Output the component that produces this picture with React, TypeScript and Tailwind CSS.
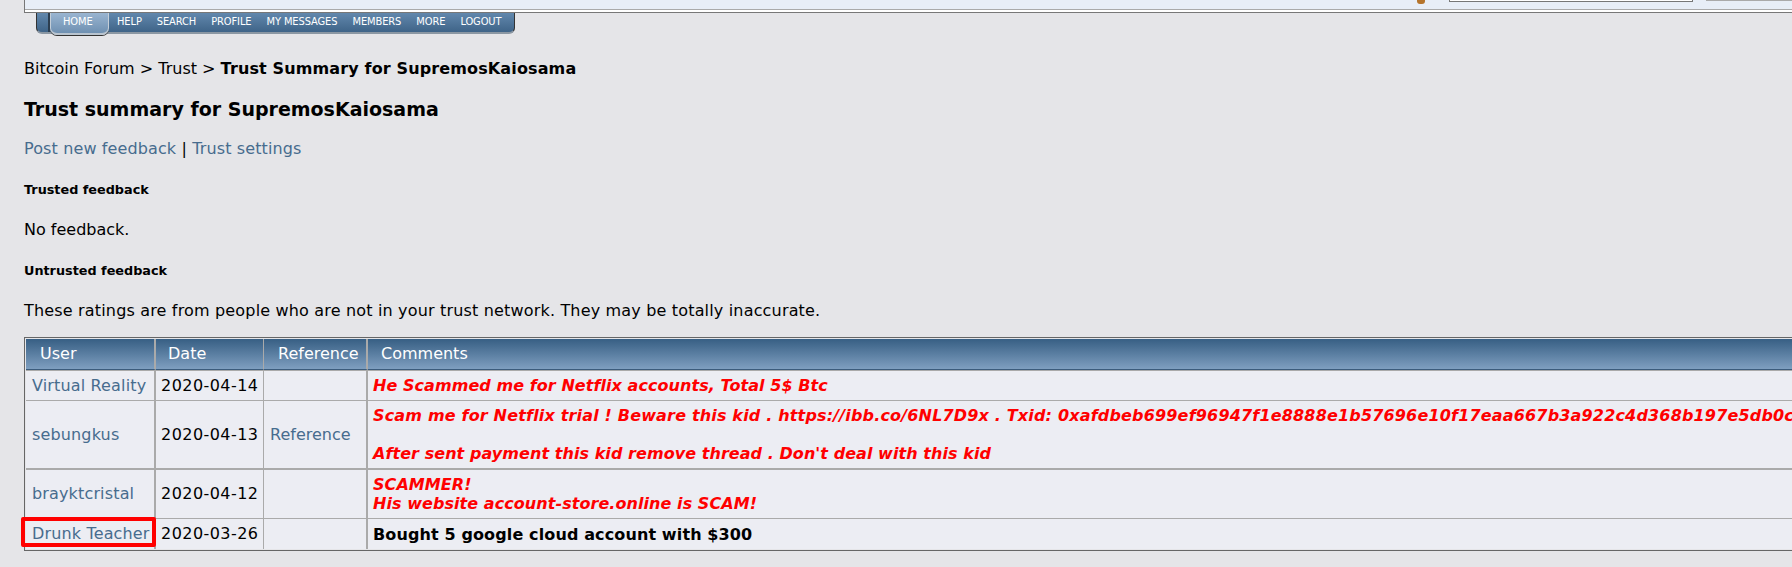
const linkColor = 'text-[#476c8e]'

const navItems = ['HELP', 'SEARCH', 'PROFILE', 'MY MESSAGES', 'MEMBERS', 'MORE', 'LOGOUT']

const rows = [
  { user: 'Virtual Reality', date: '2020-04-14', reference: '', height: 'h-[29px]' },
  { user: 'sebungkus', date: '2020-04-13', reference: 'Reference', height: 'h-[67px]' },
  { user: 'brayktcristal', date: '2020-04-12', reference: '', height: 'h-[49px] border-t border-t-[#aaaaaa]' },
  { user: 'Drunk Teacher', date: '2020-03-26', reference: '', height: 'h-[30px]' },
]

const columns = [
  { title: 'User', className: 'pl-[14px] border-r-2 border-r-[#aaaaaa]' },
  { title: 'Date', className: 'pl-[12px] border-r border-r-[#aaaaaa]' },
  { title: 'Reference', className: 'pl-[14px] border-r-2 border-r-[#aaaaaa]' },
  { title: 'Comments', className: 'pl-[13px]' },
]

function Comment({ index }: { index: number }) {
  if (index === 0) {
    return <span className="font-bold italic text-[#ff0000]">He Scammed me for Netflix accounts, Total 5$ Btc</span>
  }
  if (index === 1) {
    return (
      <span className="font-bold italic text-[#ff0000]">
        <span className="tracking-[0.17px]">
          Scam me for Netflix trial ! Beware this kid . https://ibb.co/6NL7D9x . Txid: 0xafdbeb699ef96947f1e8888e1b57696e10f17eaa667b3a922c4d368b197e5db0c1a2f3
        </span>
        <br />
        <br />
        After sent payment this kid remove thread . Don't deal with this kid
      </span>
    )
  }
  if (index === 2) {
    return (
      <span className="font-bold italic text-[#ff0000]">
        SCAMMER!
        <br />
        His website account-store.online is SCAM!
      </span>
    )
  }
  return <span className="font-bold text-black tracking-[0.12px]">Bought 5 google cloud account with $300</span>
}

function TopBar() {
  return (
    <div>
      <div className="h-[13px] ml-6 border-l border-b border-[#777] bg-white relative">
        <div className="h-[10px] border-b border-[#aaa] bg-[#e8eef7]" />
        <div className="absolute right-[99px] top-0 w-[244px] h-[2px] border border-t-0 border-[#777] bg-white" />
        <div className="absolute right-0 top-0 w-[86px] h-px bg-[#aaa]" />
        <div className="absolute left-[1392px] top-0 w-[8px] h-[4px] rounded-b-[3px] bg-[#b5742c]" />
      </div>
      <nav className="ml-[36px] w-[479px] h-[21px] flex items-stretch rounded-b-[6px] border-x border-x-[#333] border-b-2 border-b-[#8b97a3] bg-gradient-to-b from-[#6288ad] to-[#3f6488] whitespace-nowrap text-white text-[11px] tracking-[-0.1px] font-['DejaVu_Sans_Condensed','DejaVu_Sans',sans-serif]">
        <div className="w-[13px] border-r-2 border-[#2c3e50]" />
        <div className="w-[59px] h-[22px] pl-[12px] pb-[2px] rounded-b-[7px] border-x border-b-2 border-x-[#c4ced8] border-b-[#b9c4cf] bg-gradient-to-b from-[#9ab5d1] to-[#6f90b1] flex items-center shadow-[0_1px_0_#333]">
          HOME
        </div>
        <div className="flex items-center gap-[15px] pl-[8px] pb-[2px]">
          {navItems.map((item) => (
            <span key={item}>{item}</span>
          ))}
        </div>
      </nav>
    </div>
  )
}

export default function App() {
  return (
    <div className="w-[1792px] h-[567px] overflow-hidden bg-[#e5e5e8] text-black text-[16px] leading-[20px] font-['DejaVu_Sans','Liberation_Sans',sans-serif]">
      <TopBar />

      <div className="pl-6 pt-[25px]">
        <div className="h-[20px]">
          Bitcoin Forum &gt; Trust &gt; <span className="font-bold tracking-[0.13px]">Trust Summary for SupremosKaiosama</span>
        </div>
        <h1 className="mt-[20px] text-[19px] font-bold leading-[20px]">Trust summary for SupremosKaiosama</h1>
        <div className="mt-[20px] tracking-[0.12px]">
          <span className={linkColor}>Post new feedback</span> | <span className={linkColor}>Trust settings</span>
        </div>
        <h2 className="mt-[21px] text-[12.8px] font-bold leading-[20px]">Trusted feedback</h2>
        <p className="mt-[20px]">No feedback.</p>
        <h2 className="mt-[21px] text-[12.8px] font-bold leading-[20px]">Untrusted feedback</h2>
        <p className="mt-[20px] tracking-[0.17px]">These ratings are from people who are not in your trust network. They may be totally inaccurate.</p>
      </div>

      <div className="ml-6 mt-[16px] w-[1900px] border border-[#666] p-px bg-[#e5e5e8]">
        <div className="bg-[#aaaaaa] grid grid-cols-[130px_108px_104px_1fr] gap-y-px">
          {columns.map((column) => (
            <div
              key={column.title}
              className={`h-[31px] flex items-center text-white bg-gradient-to-b from-[#375f84] to-[#7f9fc0] border-b border-b-[#3c5c7c] ${column.className}`}
            >
              {column.title}
            </div>
          ))}
          {rows.map((row, i) => (
            <div key={row.user} className="contents">
              <div className={`${row.height} relative flex items-center pl-[6px] tracking-[0.15px] bg-[#ecedf3] border-r-2 border-r-[#aaaaaa] ${linkColor}`}>
                {row.user}
                {i === 3 && (
                  <div className="absolute -left-[5px] -top-[2px] w-[135px] h-[30px] border-[4px] border-[#ff0000] rounded-[2px]" />
                )}
              </div>
              <div className={`${row.height} flex items-center pl-[5px] tracking-[0.45px] bg-[#ecedf3] border-r border-r-[#aaaaaa]`}>{row.date}</div>
              <div className={`${row.height} flex items-center pl-[6px] bg-[#ecedf3] border-r-2 border-r-[#aaaaaa] ${linkColor}`}>{row.reference}</div>
              <div className={`${row.height} flex items-center pl-[5px] bg-[#ecedf3] whitespace-nowrap leading-[19px] tracking-[0.06px]`}>
                <div>
                  <Comment index={i} />
                </div>
              </div>
            </div>
          ))}
        </div>
      </div>
    </div>
  )
}
